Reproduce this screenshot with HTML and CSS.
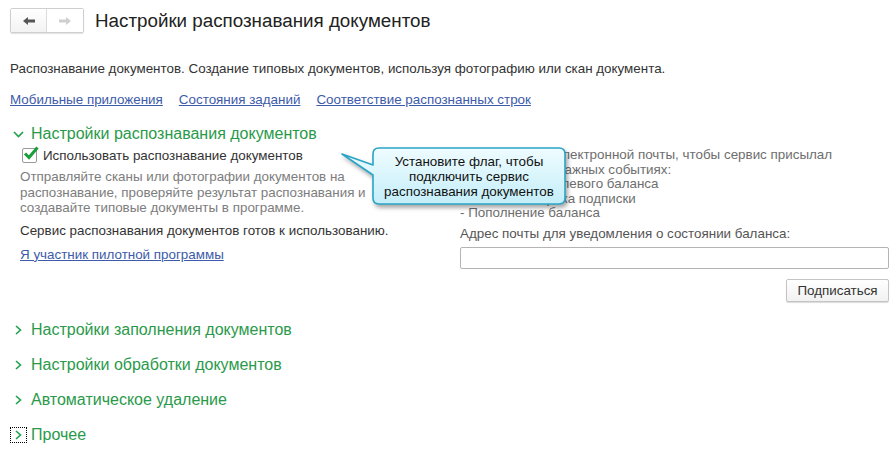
FILE: index.html
```html
<!DOCTYPE html>
<html lang="ru">

<head>
  <meta charset="UTF-8" />
  <title>Настройки распознавания документов</title>
  <link rel="stylesheet" href="styles.css">
</head>

<body>
  <div class="page">
    <div class="topbar">
      <div class="nav">
        <button class="nav-btn back" title="Назад">
          <svg width="14" height="10" viewBox="0 0 14 10"><path d="M1 5 L6 1 V3.6 H13 V6.4 H6 V9 Z" fill="#555" /></svg>
        </button>
        <button class="nav-btn fwd" title="Вперед">
          <svg width="14" height="10" viewBox="0 0 14 10"><path d="M13 5 L8 1 V3.6 H1 V6.4 H8 V9 Z" fill="#cfcfcf" /></svg>
        </button>
      </div>
      <h1>Настройки распознавания документов</h1>
    </div>

    <p class="intro">Распознавание документов. Создание типовых документов, используя фотографию или скан документа.</p>

    <div class="links">
      <a href="#">Мобильные приложения</a>
      <a href="#">Состояния заданий</a>
      <a href="#">Соответствие распознанных строк</a>
    </div>

    <div class="group open">
      <div class="group-title">
        <span class="chev">
          <svg width="11" height="7" viewBox="0 0 11 7"><path d="M1 1 L5.5 5.5 L10 1" fill="none" stroke="#1fa04a" stroke-width="1.6" /></svg>
        </span>
        Настройки распознавания документов
      </div>
      <div class="group-body">
        <div class="col-left">
          <label class="check-row">
            <span class="checkbox">
              <svg width="18" height="18" viewBox="0 0 18 18"><path d="M3 8.5 L7 12.5 L15.5 2.5" fill="none" stroke="#1a9e3c" stroke-width="3" /></svg>
            </span>
            Использовать распознавание документов
          </label>
          <p class="hint">Отправляйте сканы или фотографии документов на распознавание, проверяйте результат распознавания и создавайте типовые документы в программе.</p>
          <p class="status">Сервис распознавания документов готов к использованию.</p>
          <a class="pilot" href="#">Я участник пилотной программы</a>
        </div>
        <div class="col-right">
          <p class="notice">Укажите адрес электронной почты, чтобы сервис присылал<br>уведомления о важных событиях:<br>- Достижение нулевого баланса<br>- Окончание срока подписки<br>- Пополнение баланса</p>
          <div class="field-label">Адрес почты для уведомления о состоянии баланса:</div>
          <input class="email" type="text" />
          <div class="actions">
            <button class="btn">Подписаться</button>
          </div>
        </div>
      </div>
    </div>

    <div class="group">
      <div class="group-title">
        <span class="chev"><svg width="7" height="10" viewBox="0 0 7 10"><path d="M1 1 L5.5 5 L1 9" fill="none" stroke="#1fa04a" stroke-width="1.6" /></svg></span>
        Настройки заполнения документов
      </div>
    </div>
    <div class="group">
      <div class="group-title">
        <span class="chev"><svg width="7" height="10" viewBox="0 0 7 10"><path d="M1 1 L5.5 5 L1 9" fill="none" stroke="#1fa04a" stroke-width="1.6" /></svg></span>
        Настройки обработки документов
      </div>
    </div>
    <div class="group">
      <div class="group-title">
        <span class="chev"><svg width="7" height="10" viewBox="0 0 7 10"><path d="M1 1 L5.5 5 L1 9" fill="none" stroke="#1fa04a" stroke-width="1.6" /></svg></span>
        Автоматическое удаление
      </div>
    </div>
    <div class="group">
      <div class="group-title">
        <span class="chev focused"><svg width="7" height="10" viewBox="0 0 7 10"><path d="M1 1 L5.5 5 L1 9" fill="none" stroke="#1fa04a" stroke-width="1.6" /></svg></span>
        Прочее
      </div>
    </div>

    <!-- подсказка поверх формы -->
    <div class="callout">
      <svg class="callout-shape" width="236" height="68" viewBox="0 0 236 68">
        <defs>
          <linearGradient id="bubble" x1="0" y1="0" x2="0" y2="1">
            <stop offset="0" stop-color="#effcff" />
            <stop offset="1" stop-color="#c4eef9" />
          </linearGradient>
        </defs>
        <path d="M41 5 H221 Q227 5 227 11 V55 Q227 61 221 61 H41 Q35 61 35 55 V32 L4 11 L35 22 V11 Q35 5 41 5 Z"
          fill="url(#bubble)" stroke="#2ba4c6" stroke-width="1.6" stroke-linejoin="round" />
      </svg>
      <div class="callout-text">Установите флаг, чтобы<br>подключить сервис<br>распознавания документов</div>
    </div>
  </div>
</body>

</html>
```

FILE: styles.css
```css
body {
  margin: 0;
  font-family: "Liberation Sans", Arial, sans-serif;
  font-size: 13.4px;
  color: #333;
  background: #fff;
}

.page {
  position: relative;
  padding: 0 7px 0 10px;
}

.topbar {
  display: flex;
  align-items: center;
  gap: 11px;
  padding-top: 8px;
  height: 25px;
}

.nav {
  display: flex;
  border: 1px solid #cfcfcf;
  border-radius: 2px;
  height: 23px;
  box-shadow: 0 1px 1px rgba(0, 0, 0, 0.12);
}

.nav-btn {
  width: 36px;
  height: 23px;
  border: 0;
  padding: 0;
  background: #fff;
  display: flex;
  align-items: center;
  justify-content: center;
}

.nav-btn.back {
  background: linear-gradient(#fff, #f3f3f3);
  border-right: 1px solid #dcdcdc;
}

h1 {
  margin: 0;
  font-size: 18.8px;
  font-weight: normal;
  color: #222;
}

.intro {
  margin: 28px 0 0;
  line-height: 16px;
}

.links {
  display: flex;
  gap: 16px;
  margin-top: 15px;
  line-height: 16px;
}

a {
  color: #3d5ba9;
  text-decoration: underline;
}

.group {
  margin-top: 15px;
}

.group.open {
  margin-top: 16px;
}

.group.open + .group {
  margin-top: 18px;
}

.group-title {
  display: flex;
  align-items: center;
  height: 20px;
  font-size: 16px;
  color: #2a9a4a;
}

.chev {
  width: 17px;
  height: 16px;
  margin-right: 4px;
  display: flex;
  align-items: center;
  justify-content: center;
  box-sizing: border-box;
}

.chev.focused {
  border: 1px dotted #000;
}

.group-body {
  display: flex;
  gap: 20px;
  padding: 3px 0 0 10px;
}

.col-left {
  width: 420px;
}

.col-right {
  flex: 1;
  display: flex;
  flex-direction: column;
  padding-top: 1px;
}

.check-row {
  display: flex;
  align-items: center;
  gap: 6px;
  height: 16px;
  margin-left: 2px;
}

.checkbox {
  position: relative;
  width: 13px;
  height: 13px;
  border: 1px solid #9a9a9a;
  border-radius: 2px;
  background: #fff;
}

.checkbox svg {
  position: absolute;
  left: -1px;
  top: -4px;
}

.hint {
  margin: 6px 0 0;
  width: 380px;
  line-height: 15.5px;
  color: #7d7d7d;
}

.status {
  margin: 7px 0 0;
  line-height: 16px;
}

.pilot {
  display: inline-block;
  margin-top: 8px;
  line-height: 16px;
}

.notice {
  margin: 0;
  line-height: 14.5px;
  color: #6e6e6e;
}

.field-label {
  margin-top: 5px;
  line-height: 16px;
  color: #555;
}

.email {
  margin-top: 5px;
  height: 22px;
  box-sizing: border-box;
  border: 1px solid #b4b4b4;
  border-radius: 2px;
  outline: none;
}

.actions {
  display: flex;
  justify-content: flex-end;
  margin-top: 10px;
}

.btn {
  width: 103px;
  height: 23px;
  font-family: inherit;
  font-size: 13.4px;
  color: #333;
  border: 1px solid #c4c4c4;
  border-radius: 2px;
  background: linear-gradient(#fff, #f1f1f1);
  box-shadow: 0 1px 1px rgba(0, 0, 0, 0.15);
}

.callout {
  position: absolute;
  left: 338px;
  top: 143px;
  width: 236px;
  height: 68px;
}

.callout-shape {
  display: block;
  filter: drop-shadow(2px 3px 2px rgba(0, 0, 0, 0.35));
}

.callout-text {
  position: absolute;
  left: 35px;
  top: 11px;
  width: 192px;
  text-align: center;
  line-height: 15px;
  color: #111;
}
```
